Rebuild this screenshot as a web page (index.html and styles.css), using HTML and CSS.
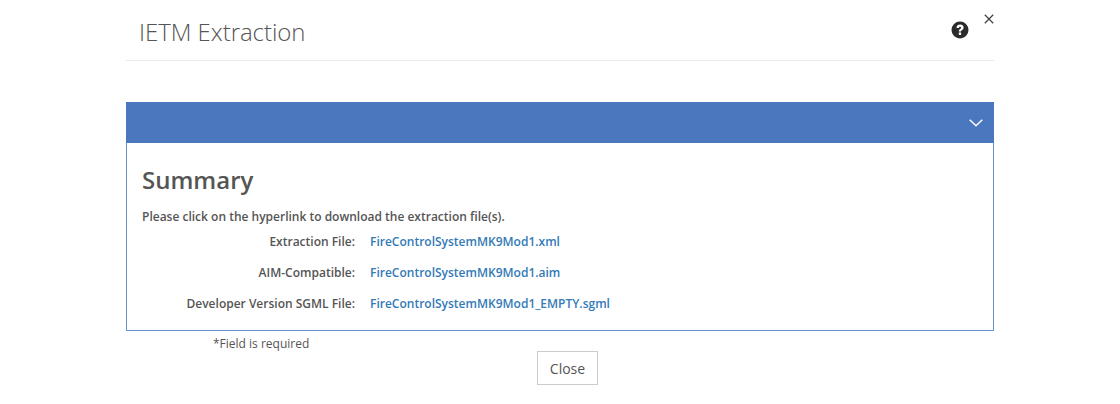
FILE: index.html
```html
<!DOCTYPE html>
<html lang="en">
<head>
  <meta charset="UTF-8" />
  <title>IETM Extraction</title>
  <link rel="stylesheet" href="styles.css">
</head>
<body>
  <div class="modal">
    <header class="modal-header">
      <h1>IETM Extraction</h1>
      <svg class="help-icon" viewBox="0 0 18 18" aria-label="Help">
        <circle cx="9" cy="9" r="8.500" fill="#2b2b2b"/>
        <path d="M5.500 6.900c0-2.200 1.500-3.400 3.600-3.400 2 0 3.500 1.200 3.500 3 0 1.500-.9 2.100-1.800 2.700-.6.400-.8.700-.8 1.300H7.800c0-1.500.5-2.100 1.300-2.600.6-.4 1-.7 1-1.200 0-.6-.4-.9-1-.9-.7 0-1.100.5-1.200 1.300z" fill="#fff"/>
        <rect x="7.800" y="11.500" width="2.300" height="2.400" fill="#fff"/>
      </svg>
      <svg class="close-icon" viewBox="0 0 10 10" aria-label="Close">
        <path d="M.8.8l8.400 8.400M9.200.8L.8 9.200" stroke="#444" stroke-width="1.300" fill="none"/>
      </svg>
    </header>

    <section class="panel">
      <div class="panel-bar">
        <svg class="chevron" viewBox="0 0 14 8">
          <path d="M.7.7L7 6.700 13.300.7" stroke="#fff" stroke-width="1.500" fill="none"/>
        </svg>
      </div>
      <div class="panel-body">
        <h2>Summary</h2>
        <p class="intro">Please click on the hyperlink to download the extraction file(s).</p>
        <div class="file-row">
          <span class="file-label">Extraction File:</span>
          <a href="#">FireControlSystemMK9Mod1.xml</a>
        </div>
        <div class="file-row">
          <span class="file-label">AIM-Compatible:</span>
          <a href="#">FireControlSystemMK9Mod1.aim</a>
        </div>
        <div class="file-row">
          <span class="file-label">Developer Version SGML File:</span>
          <a href="#">FireControlSystemMK9Mod1_EMPTY.sgml</a>
        </div>
      </div>
    </section>

    <p class="required">*Field is required</p>
    <div class="actions">
      <button class="close-btn">Close</button>
    </div>
  </div>
</body>
</html>
```

FILE: styles.css
```css
html, body {
  margin: 0; padding: 0; background: #fff; color: #555;
  font-family: 'Open Sans', sans-serif; font-size: 12px;
}
.modal {
  width: 868px; margin-left: 126px; height: 404px; overflow: hidden;
}
.modal-header {
  display: flex; align-items: flex-start; height: 60px;
  border-bottom: 1px solid #e9e9e9; margin-bottom: 41px;
}
.modal-header h1 {
  margin: 15px 0 0 13px; font-size: 24px; line-height: 33px; font-weight: 300;
  color: #555; flex: 1; letter-spacing: -.05px;
}
.help-icon {
  width: 18px; height: 18px; margin: 21px 0 0 0;
}
.close-icon {
  width: 10px; height: 10px; margin: 14px 0 0 15px;
}
.panel {
  border: 1px solid #6a8fd0; border-top: 0;
}
.panel-bar {
  display: flex; align-items: center; justify-content: flex-end;
  height: 41px; background: #4b77be; margin: 0 -1px; padding-right: 11px;
}
.chevron {
  width: 14px; height: 8px;
}
.panel-body {
  padding: 20px 15px 18px;
}
.panel-body h2 {
  margin: 0; font-size: 24px; line-height: 33px; font-weight: 600; color: #555;
}
.intro {
  margin: 12px 0 0; line-height: 17px; font-weight: 600;
}
.file-row {
  display: flex; line-height: 17px; margin-top: 14px; font-weight: 600;
}
.intro + .file-row {
  margin-top: 8px;
}
.file-label {
  width: 213px; text-align: right; margin-right: 15px;
}
.file-row a {
  color: #337ab7; text-decoration: none;
}
.required {
  margin: 4px 0 0 87px; line-height: 17px; color: #555;
}
.actions {
  display: flex; justify-content: center; margin-top: -1px; padding-left: 15px;
}
.close-btn {
  width: 61px; height: 34px; padding: 0; background: #fff; border: 1px solid #ccc;
  font-family: inherit; font-size: 14px; color: #555;
}
```
